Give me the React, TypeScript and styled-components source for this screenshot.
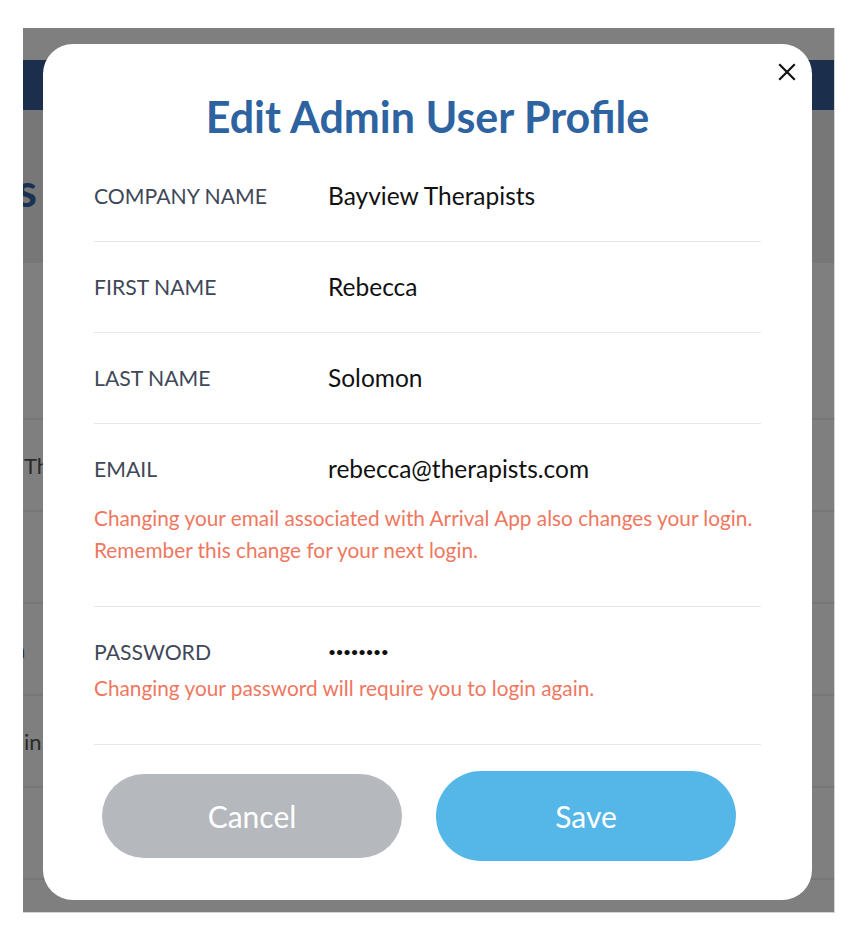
import React from "react";
import styled, { createGlobalStyle } from "styled-components";

const GlobalStyle = createGlobalStyle`
  html, body { margin: 0; padding: 0; background: #ffffff; }
  body { font-family: Lato, "Noto Sans", sans-serif; -webkit-font-smoothing: antialiased; }
  * { box-sizing: border-box; }
`;

const Page = styled.div`
  width: 852px;
  height: 930px;
  padding: 28px 18px 18px 23px;
  background: #ffffff;
`;

const Frame = styled.div`
  position: relative;
  width: 812px;
  height: 885px;
  overflow: hidden;
  background: #ffffff;
  border-right: 1px solid #d4d4d4;
  border-bottom: 1px solid #d4d4d4;
`;

const AppHeader = styled.div`
  margin-top: 32px;
  height: 50px;
  background: #365e9a;
`;

const Hero = styled.div`
  height: 153px;
  background: #eeeeee;
  display: flex;
  align-items: center;
  padding-top: 6px;
`;

const HeroTitle = styled.h1`
  margin: 0;
  width: 14px;
  display: flex;
  justify-content: flex-end;
  white-space: nowrap;
  font-size: 46px;
  font-weight: 700;
  color: #3563a4;
`;

const ListHead = styled.div`
  height: 157px;
  border-bottom: 2px solid #ececec;
`;

const ListRow = styled.div`
  height: 92px;
  border-bottom: 2px solid #ececec;
  display: flex;
  align-items: center;
  overflow: hidden;
`;

const RowText = styled.span<{ $shift: number }>`
  margin-left: ${(p) => p.$shift}px;
  white-space: nowrap;
  font-size: 22px;
  color: #555555;
`;

const Overlay = styled.div`
  position: absolute;
  inset: 0;
  background: rgba(0, 0, 0, 0.5);
  display: flex;
  align-items: flex-start;
  padding: 16px 0 0 20px;
`;

const Modal = styled.div`
  position: relative;
  width: 769px;
  height: 856px;
  background: #ffffff;
  border-radius: 30px;
  padding: 49px 51px 0 51px;
  display: flex;
  flex-direction: column;
`;

const Close = styled.button`
  position: absolute;
  top: 19px;
  right: 16px;
  width: 18px;
  height: 18px;
  padding: 0;
  border: none;
  background: transparent;
  display: flex;
  align-items: center;
  justify-content: center;
  cursor: pointer;
`;

const Title = styled.h2`
  margin: 0 0 10px;
  text-align: center;
  font-size: 43px;
  line-height: 48px;
  font-weight: 700;
  color: #2e63a1;
`;

const Field = styled.div`
  padding: 31px 0 31px;
  border-bottom: 1px solid #e8e8e8;
`;

const FieldLine = styled.div`
  display: grid;
  grid-template-columns: 234px 1fr;
  align-items: center;
  line-height: 28px;
`;

const Label = styled.span`
  font-size: 21.2px;
  color: #3f4858;
`;

const Value = styled.span<{ $dots?: boolean }>`
  font-size: ${(p) => (p.$dots ? "14px" : "24.5px")};
  letter-spacing: ${(p) => (p.$dots ? "-0.6px" : "0")};
  color: #111111;
`;

const Note = styled.p<{ $gap: number }>`
  margin: ${(p) => p.$gap}px 0 9px;
  font-size: 20.8px;
  line-height: 32px;
  color: #f0775f;
`;

const Actions = styled.div`
  display: flex;
  align-items: center;
  gap: 34px;
  margin-top: 26px;
  padding-left: 8px;
`;

const Button = styled.button<{ $primary?: boolean }>`
  width: 300px;
  height: ${(p) => (p.$primary ? "90px" : "84px")};
  border: none;
  border-radius: 999px;
  background: ${(p) => (p.$primary ? "#55b7e8" : "#b5b8bd")};
  color: #ffffff;
  font-family: Lato, "Noto Sans", sans-serif;
  font-size: 30px;
  cursor: pointer;
`;

type FieldDef = { label: string; value: string; note?: string[]; gap?: number; dots?: boolean };

const fields: FieldDef[] = [
  { label: "COMPANY NAME", value: "Bayview Therapists" },
  { label: "FIRST NAME", value: "Rebecca" },
  { label: "LAST NAME", value: "Solomon" },
  {
    label: "EMAIL",
    value: "rebecca@therapists.com",
    note: [
      "Changing your email associated with Arrival App also changes your login.",
      "Remember this change for your next login.",
    ],
    gap: 19,
  },
  {
    label: "PASSWORD",
    value: "••••••••",
    dots: true,
    note: ["Changing your password will require you to login again."],
    gap: 6,
  },
];

const rows: { text: string; shift: number }[] = [
  { text: "Th", shift: 1 },
  { text: "", shift: 0 },
  { text: "n", shift: -10 },
  { text: "in", shift: 1 },
  { text: "", shift: 0 },
  { text: "", shift: 0 },
];

export default function App() {
  return (
    <>
      <GlobalStyle />
      <Page>
        <Frame>
          <AppHeader />
          <Hero>
            <HeroTitle>Users</HeroTitle>
          </Hero>
          <ListHead />
          {rows.map((r, i) => (
            <ListRow key={i}>
              <RowText $shift={r.shift}>{r.text}</RowText>
            </ListRow>
          ))}
          <Overlay>
            <Modal>
              <Close aria-label="Close">
                <svg width="18" height="18" viewBox="0 0 18 18">
                  <path d="M2 2 L16 16 M16 2 L2 16" stroke="#111" strokeWidth="2.2" strokeLinecap="square" />
                </svg>
              </Close>
              <Title>Edit Admin User Profile</Title>
              {fields.map((f) => (
                <Field key={f.label}>
                  <FieldLine>
                    <Label>{f.label}</Label>
                    <Value $dots={f.dots}>{f.value}</Value>
                  </FieldLine>
                  {f.note && (
                    <Note $gap={f.gap ?? 0}>
                      {f.note.map((line, i) => (
                        <React.Fragment key={i}>
                          {i > 0 && <br />}
                          {line}
                        </React.Fragment>
                      ))}
                    </Note>
                  )}
                </Field>
              ))}
              <Actions>
                <Button>Cancel</Button>
                <Button $primary>Save</Button>
              </Actions>
            </Modal>
          </Overlay>
        </Frame>
      </Page>
    </>
  );
}
